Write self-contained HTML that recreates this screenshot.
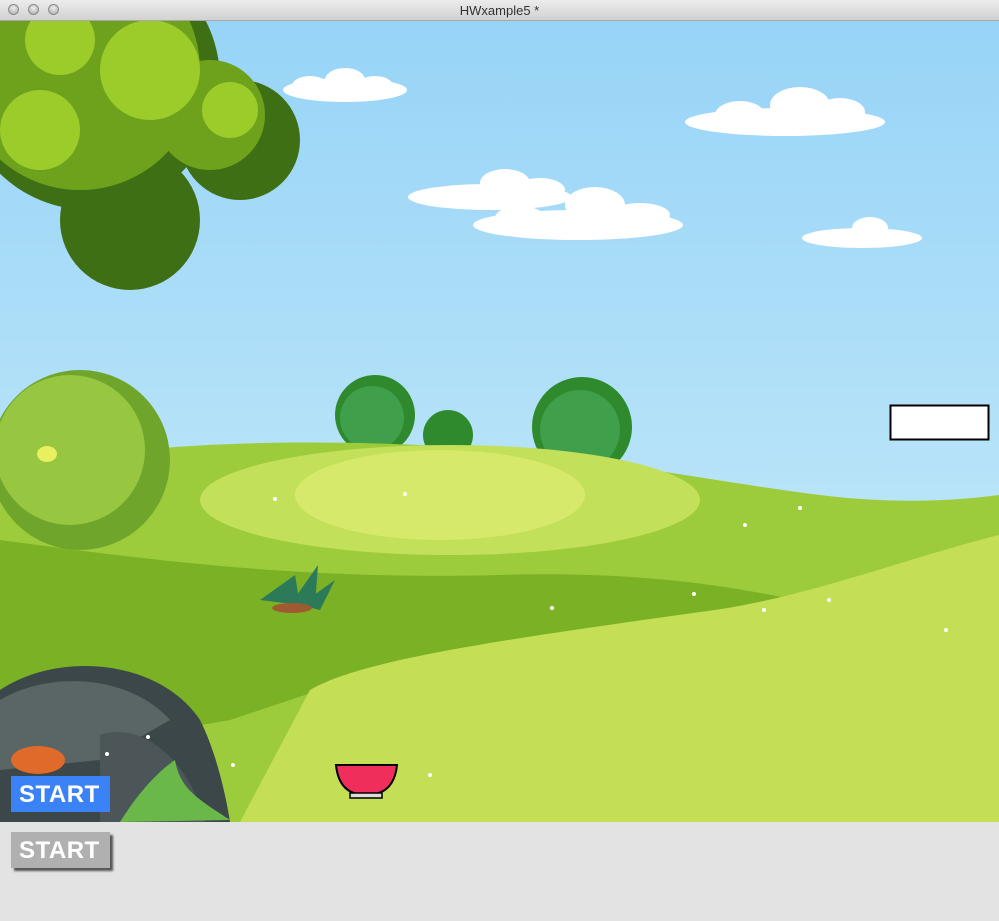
<!DOCTYPE html>
<html><head><style>
body{margin:0;width:999px;height:921px;overflow:hidden;background:#e3e3e3;font-family:"Liberation Sans",sans-serif}
#tb{position:absolute;left:0;top:0;width:999px;height:21px;background:linear-gradient(#ececec,#d2d2d2);border-bottom:1px solid #a8a8a8;box-sizing:border-box;text-align:center;font-size:13px;line-height:21px;color:#333}
.dot{position:absolute;top:4px;width:11px;height:11px;border-radius:50%;background:radial-gradient(circle at 50% 35%,#eee,#a9a9a9);border:1px solid #8a8a8a;box-sizing:border-box}
svg{position:absolute;left:0;top:21px}
.btn{position:absolute;left:11px;width:99px;height:36px;color:#fff;font-size:24px;font-weight:bold;line-height:37px;text-indent:8px;letter-spacing:0.5px}
</style></head><body>
<div id="tb">HWxample5 *<span class="dot" style="left:8px"></span><span class="dot" style="left:28px"></span><span class="dot" style="left:48px"></span></div>
<svg width="999" height="801" viewBox="0 21 999 801">
<defs><linearGradient id="sky" x1="0" y1="0" x2="0" y2="1"><stop offset="0" stop-color="#97d4f7"/><stop offset="1" stop-color="#cfeefa"/></linearGradient></defs>
<rect x="0" y="21" width="999" height="801" fill="url(#sky)"/>
<g fill="#fff">
<ellipse cx="345" cy="90" rx="62" ry="12"/><ellipse cx="345" cy="80" rx="20" ry="12"/><ellipse cx="310" cy="86" rx="18" ry="10"/><ellipse cx="375" cy="86" rx="18" ry="10"/>
<ellipse cx="785" cy="122" rx="100" ry="14"/><ellipse cx="800" cy="105" rx="30" ry="18"/><ellipse cx="740" cy="115" rx="25" ry="14"/><ellipse cx="840" cy="112" rx="25" ry="14"/>
<ellipse cx="490" cy="197" rx="82" ry="13"/><ellipse cx="505" cy="183" rx="25" ry="14"/><ellipse cx="540" cy="190" rx="25" ry="12"/>
<ellipse cx="578" cy="225" rx="105" ry="15"/><ellipse cx="595" cy="205" rx="30" ry="18"/><ellipse cx="640" cy="215" rx="30" ry="12"/><ellipse cx="520" cy="218" rx="25" ry="12"/>
<ellipse cx="862" cy="238" rx="60" ry="10"/><ellipse cx="870" cy="228" rx="18" ry="11"/>
</g>
<g fill="#2f8a2e"><circle cx="375" cy="415" r="40"/><circle cx="448" cy="435" r="25"/><circle cx="582" cy="427" r="50"/></g>
<g fill="#3f9f4a"><circle cx="372" cy="418" r="32"/><circle cx="580" cy="430" r="40"/></g>
<path d="M0 470 C150 440 300 440 420 445 C560 450 700 480 820 495 C900 505 960 500 999 495 L999 822 L0 822Z" fill="#9ccc3c"/>
<ellipse cx="450" cy="500" rx="250" ry="55" fill="#c2e05a"/>
<ellipse cx="440" cy="495" rx="145" ry="45" fill="#d6e96a"/>
<path d="M0 540 C150 560 300 580 500 575 C650 570 750 590 810 603 L700 620 C500 650 380 660 320 690 L230 720 L0 760Z" fill="#7bb124"/>
<path d="M310 690 C360 660 500 640 700 612 C800 600 900 560 999 535 L999 822 L240 822Z" fill="#c4df55"/>
<g fill="#3f6f14"><circle cx="90" cy="80" r="130"/><circle cx="240" cy="140" r="60"/><circle cx="130" cy="220" r="70"/></g>
<g fill="#6ea21c"><circle cx="80" cy="70" r="120"/><circle cx="210" cy="115" r="55"/></g>
<g fill="#9ccc2a"><circle cx="150" cy="70" r="50"/><circle cx="40" cy="130" r="40"/><circle cx="230" cy="110" r="28"/><circle cx="60" cy="40" r="35"/></g>
<g fill="#6fa52b"><circle cx="80" cy="460" r="90"/></g>
<g fill="#97c640"><circle cx="70" cy="450" r="75"/></g>
<ellipse cx="47" cy="454" rx="10" ry="8" fill="#e8f060"/>
<g fill="#2c7a5a"><path d="M260 600 L295 575 L300 605Z"/><path d="M290 605 L318 565 L315 605Z"/><path d="M300 605 L335 580 L320 610Z"/></g>
<ellipse cx="292" cy="608" rx="20" ry="5" fill="#a05a30"/>
<path d="M0 690 C60 650 160 660 200 720 C215 750 225 790 230 822 L0 822Z" fill="#3b4749"/>
<path d="M0 700 C50 670 130 675 170 720 L100 760 L0 770Z" fill="#5a6566"/>
<path d="M100 735 C140 720 190 760 205 822 L100 822Z" fill="#4c5658"/>
<path d="M120 822 C140 790 160 770 175 760 C180 790 200 800 230 820Z" fill="#6ab84a"/>
<ellipse cx="38" cy="760" rx="27" ry="14" fill="#e06a2a"/>
<path d="M336 765 L397 765 C395 785 385 795 366 795 C348 795 338 785 336 765Z" fill="#ef2e5c" stroke="#000" stroke-width="2"/>
<rect x="350" y="793" width="32" height="5" fill="#ddd" stroke="#000" stroke-width="1.5"/>
<g fill="#fff"><circle cx="275" cy="499" r="2"/><circle cx="405" cy="494" r="2"/><circle cx="745" cy="525" r="2"/><circle cx="800" cy="508" r="2"/><circle cx="552" cy="608" r="2"/><circle cx="694" cy="594" r="2"/><circle cx="764" cy="610" r="2"/><circle cx="829" cy="600" r="2"/><circle cx="946" cy="630" r="2"/><circle cx="233" cy="765" r="2"/><circle cx="430" cy="775" r="2"/><circle cx="107" cy="754" r="2"/><circle cx="148" cy="737" r="2"/></g>
<rect x="890.5" y="405.5" width="98" height="34" fill="#fff" stroke="#000" stroke-width="2"/>
</svg>
<div class="btn" style="top:776px;background:#3b82f6">START</div>
<div class="btn" style="top:832px;background:#b0b0b0;box-shadow:3px 3px 2px #555">START</div>
</body></html>
